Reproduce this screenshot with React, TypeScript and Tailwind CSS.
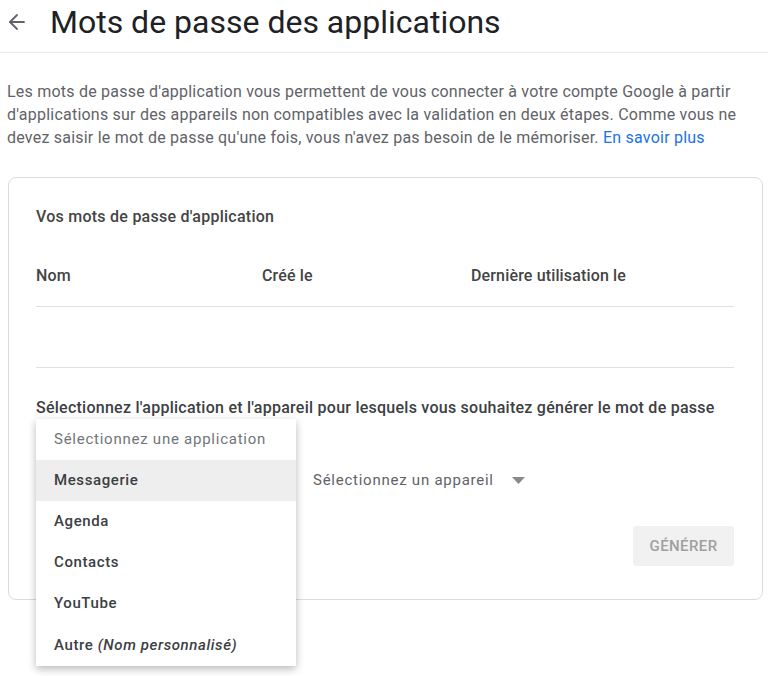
import { ArrowLeft } from "lucide-react";

const apps = ["Messagerie", "Agenda", "Contacts", "YouTube"];

export default function App() {
  return (
    <div className="min-h-screen bg-white font-['Roboto',sans-serif] text-[#202124]">
      <div className="border-b border-[#e8eaed] pb-2">
        <div className="flex h-[44px] items-center">
          <ArrowLeft className="ml-[5px] h-[24px] w-[24px] text-[#5f6368]" strokeWidth={1.8} />
          <h1 className="ml-[21px] text-[32px] font-normal leading-none text-[#202124]">
            Mots de passe des applications
          </h1>
        </div>
      </div>

      <p className="mt-[27px] px-[7px] text-[16px] leading-[23px] tracking-[0.22px] whitespace-nowrap text-[#5f6368]">
        Les mots de passe d'application vous permettent de vous connecter à votre compte Google à partir
        <br />
        d'applications sur des appareils non compatibles avec la validation en deux étapes. Comme vous ne
        <br />
        devez saisir le mot de passe qu'une fois, vous n'avez pas besoin de le mémoriser.{" "}
        <a className="text-[#1a73e8]">En savoir plus</a>
      </p>

      <div className="ml-[8px] mr-[5px] mt-[28px] rounded-lg border border-[#dadce0] pl-[27px] pr-[28px] pb-[33px] pt-[27px]">
        <h2 className="text-[16px] font-medium leading-[24px] tracking-[0.25px] text-[#444]">
          Vos mots de passe d'application
        </h2>

        <div className="mt-[17px] flex h-[61px] items-center border-b border-[#e0e0e0] text-[16px] font-medium tracking-[0.15px] text-[#444]">
          <span className="w-[226px]">Nom</span>
          <span className="w-[209px]">Créé le</span>
          <span>Dernière utilisation le</span>
        </div>
        <div className="h-[61px] border-b border-[#e0e0e0]" />

        <h3 className="mt-[28px] text-[16px] font-medium leading-[24px] tracking-[0.25px] text-[#3c4043]">
          Sélectionnez l'application et l'appareil pour lesquels vous souhaitez générer le mot de passe
        </h3>

        <div className="relative mt-[40px] flex h-[40px] items-center">
          <div className="w-[260px]" />
          <div className="ml-[17px] flex items-center text-[15px] tracking-[0.75px] text-[#5f6368]">
            <span>Sélectionnez un appareil</span>
            <svg className="ml-[18px]" width="13" height="7" viewBox="0 0 13 7">
              <path d="M0 0h13L6.5 7z" fill="#8a8a8a" />
            </svg>
          </div>

          <div className="absolute left-0 top-[-41px] z-10 w-[260px] bg-white shadow-[0_3px_8px_rgba(0,0,0,0.28)]">
            <div className="flex h-[41px] items-center pl-[18px] text-[15px] tracking-[0.75px] text-[#70757a]">
              Sélectionnez une application
            </div>
            {apps.map((a, i) => (
              <div
                key={a}
                className={
                  i === 0
                    ? "flex h-[41px] items-center bg-[#eeeeee] pl-[18px] text-[15px] font-medium tracking-[0.6px] text-[#3c4043]"
                    : "flex h-[41px] items-center pl-[18px] text-[15px] font-medium tracking-[0.6px] text-[#3c4043]"
                }
              >
                {a}
              </div>
            ))}
            <div className="flex h-[42px] items-center pl-[18px] text-[15px] font-medium tracking-[0.6px] text-[#3c4043]">
              Autre&nbsp;<i>(Nom personnalisé)</i>
            </div>
          </div>
        </div>

        <div className="mt-[26px] flex justify-end">
          <button className="h-[40px] w-[101px] rounded-[3px] bg-[#f1f1f1] text-[15px] font-medium tracking-[0.4px] text-[#a0a0a0]">
            GÉNÉRER
          </button>
        </div>
      </div>
    </div>
  );
}
